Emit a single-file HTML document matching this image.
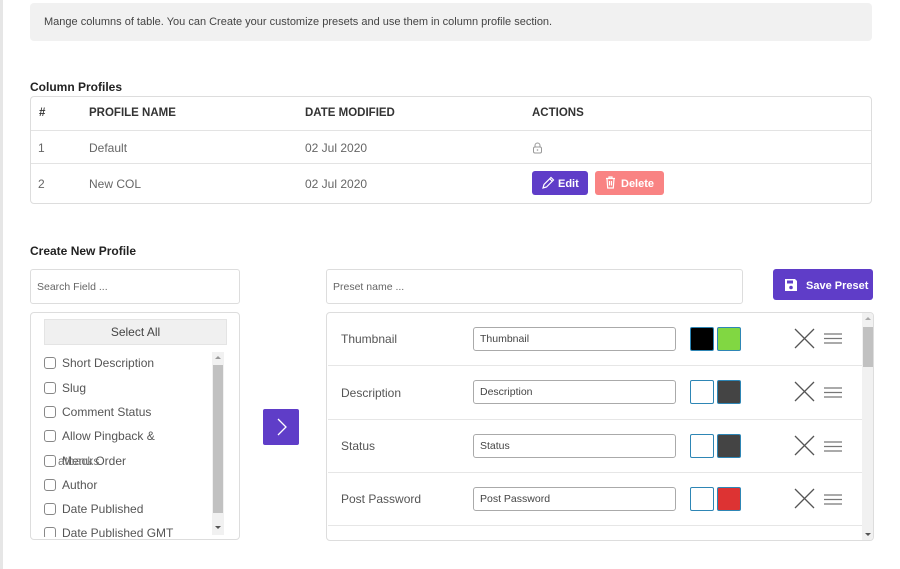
<!DOCTYPE html>
<html><head><meta charset="utf-8"><style>
*{box-sizing:border-box;margin:0;padding:0}
body{width:900px;height:569px;overflow:hidden;background:#fff;font-family:"Liberation Sans",Arial,sans-serif;color:#444;position:relative}
.a{position:absolute}
.lb{left:0;top:0;width:3px;height:569px;background:#e6e6e6}
.info{left:30px;top:3px;width:842px;height:38px;background:#f1f1f1;border-radius:4px;font-size:11px;color:#444;padding:13px 14px}
.h{font-size:12px;font-weight:bold;color:#222}
.tbl{left:30px;top:96px;width:842px;height:108px;border:1px solid #ddd;border-radius:4px;font-size:12px}
.row{position:absolute;left:0;width:840px;border-bottom:1px solid #e3e3e3}
.th{font-weight:bold;color:#333;font-size:11.5px}
.td{color:#666}
.c{position:absolute}
.btn{position:absolute;border-radius:3px;color:#fff;font-weight:bold;font-size:11px}
.inp{border:1px solid #ddd;border-radius:3px;font-size:10.5px;color:#666;padding:0 6px;display:flex;align-items:center}
.box{border:1px solid #ddd;border-radius:4px}
.item{position:absolute;left:44px;font-size:12px;color:#555;display:flex;align-items:center}
.cb{width:12px;height:12px;border:1px solid #888;border-radius:3px;margin-right:6px;display:inline-block}
.rrow{position:absolute;left:1px;width:534px;height:53px;border-bottom:1px solid #e6e6e6}
.lbl{position:absolute;left:13px;font-size:12px;color:#555}
.ri{position:absolute;left:145px;width:203px;height:24px;border:1px solid #aaa;border-radius:3px;font-size:10.5px;color:#444;padding:0 6px;display:flex;align-items:center}
.sw{position:absolute;width:24px;height:24px;border:1px solid #2e86b5;border-radius:2px}
</style></head><body>
<div class="a lb"></div>
<div class="a info">Mange columns of table. You can Create your customize presets and use them in column profile section.</div>
<div class="a h" style="left:30px;top:80px">Column Profiles</div>
<div class="a tbl">
 <div class="row" style="top:0;height:34px">
  <span class="c th" style="left:8px;top:10px">#</span>
  <span class="c th" style="left:58px;top:10px">PROFILE NAME</span>
  <span class="c th" style="left:274px;top:10px">DATE MODIFIED</span>
  <span class="c th" style="left:501px;top:10px">ACTIONS</span>
 </div>
 <div class="row" style="top:34px;height:33px">
  <span class="c td" style="left:7px;top:10px">1</span>
  <span class="c td" style="left:58px;top:10px">Default</span>
  <span class="c td" style="left:274px;top:10px">02 Jul 2020</span>
  <svg class="c" style="left:501px;top:11px" width="11" height="12" viewBox="0 0 11 12"><path d="M3 5V3.5a2.5 2.5 0 0 1 5 0V5" fill="none" stroke="#999"/><rect x="1.5" y="5" width="8" height="6" rx="1.5" fill="none" stroke="#999"/><circle cx="5.5" cy="8" r=".8" fill="#999"/></svg>
 </div>
 <div class="row" style="top:67px;height:40px;border:none">
  <span class="c td" style="left:7px;top:13px">2</span>
  <span class="c td" style="left:58px;top:13px">New COL</span>
  <span class="c td" style="left:274px;top:13px">02 Jul 2020</span>
 </div>
</div>
<div class="btn" style="left:532px;top:171px;width:56px;height:24px;background:#5f3dc8;padding:5px 0 0 9px"><svg width="14" height="13" viewBox="0 0 14 13" style="vertical-align:-2px;margin-right:3px"><path d="M2 12l1-3.5L10 1.5l2.5 2.5L5.5 11z M9 3l2.5 2.5" fill="none" stroke="#fff" stroke-width="1.2"/></svg>Edit</div>
<div class="btn" style="left:595px;top:171px;width:69px;height:24px;background:#f98383;padding:5px 0 0 10px"><svg width="11" height="13" viewBox="0 0 11 13" style="vertical-align:-2px;margin-right:5px"><path d="M1 2.5h9M4 2.5V1h3v1.5M2 2.5l.7 9.5h5.6l.7-9.5M4.5 5v4.5M6.5 5v4.5" fill="none" stroke="#fff" stroke-width="1.2"/></svg>Delete</div>

<div class="a h" style="left:30px;top:244px">Create New Profile</div>
<div class="a inp" style="left:30px;top:269px;width:210px;height:35px">Search Field ...</div>
<div class="a inp" style="left:326px;top:269px;width:417px;height:35px">Preset name ...</div>
<div class="btn" style="left:773px;top:269px;width:100px;height:31px;background:#5f3dc8;padding:9px 0 0 11px"><svg width="14" height="14" viewBox="0 0 14 14" style="vertical-align:-3px;margin-right:8px"><path d="M1 1h10l2 2v10H1z" fill="#fff"/><rect x="3" y="2.5" width="6" height="3" fill="#5f3dc8"/><circle cx="7" cy="9.5" r="1.8" fill="#5f3dc8"/></svg>Save Preset</div>

<div class="a box" style="left:30px;top:312px;width:210px;height:228px"></div>
<div class="a" style="left:44px;top:319px;width:183px;height:26px;background:#f0f0f0;border:1px solid #e4e4e4;font-size:12px;color:#444;text-align:center;line-height:24px">Select All</div>
<div class="a" style="left:212px;top:352px;width:12px;height:183px;background:#f1f1f1"></div>
<div class="a" style="left:213px;top:365px;width:10px;height:148px;background:#c1c1c1"></div>
<div class="a" style="left:215px;top:356px;width:0;height:0;border:3px solid transparent;border-bottom-color:#999;border-top:none"></div>
<div class="a" style="left:215px;top:526px;width:0;height:0;border:3px solid transparent;border-top-color:#555;border-bottom:none"></div>
<div style="position:absolute;left:0;top:0;width:212px;height:537px;overflow:hidden">
<div class="item" style="top:356px"><span class="cb"></span>Short Description</div>
<div class="item" style="top:381px"><span class="cb"></span>Slug</div>
<div class="item" style="top:405px"><span class="cb"></span>Comment Status</div>
<div class="item" style="top:429px"><span class="cb"></span>Allow Pingback &amp;</div>
<div class="item" style="top:454px"><span class="cb"></span>Menu Order</div>
<div class="item" style="top:454px;left:58px;color:#777">atbacks</div>
<div class="item" style="top:478px"><span class="cb"></span>Author</div>
<div class="item" style="top:502px"><span class="cb"></span>Date Published</div>
<div class="item" style="top:526px"><span class="cb"></span>Date Published GMT</div>
</div>

<div class="a" style="left:263px;top:409px;width:36px;height:36px;background:#5f3dc8;border-radius:2px"><svg width="36" height="36"><path d="M15 10l8 8-8 8" fill="none" stroke="#fff" stroke-width="1.3"/></svg></div>

<div class="a box" style="left:326px;top:312px;width:548px;height:229px;overflow:hidden">
 <div class="rrow" style="top:0"><span class="lbl" style="top:19px">Thumbnail</span><div class="ri" style="top:14px">Thumbnail</div><div class="sw" style="left:362px;top:14px;background:#000"></div><div class="sw" style="left:389px;top:14px;background:#81d742"></div></div>
 <div class="rrow" style="top:54px"><span class="lbl" style="top:19px">Description</span><div class="ri" style="top:13px">Description</div><div class="sw" style="left:362px;top:13px;background:#fff"></div><div class="sw" style="left:389px;top:13px;background:#444"></div></div>
 <div class="rrow" style="top:107px"><span class="lbl" style="top:19px">Status</span><div class="ri" style="top:14px">Status</div><div class="sw" style="left:362px;top:14px;background:#fff"></div><div class="sw" style="left:389px;top:14px;background:#444"></div></div>
 <div class="rrow" style="top:160px"><span class="lbl" style="top:19px">Post Password</span><div class="ri" style="top:14px">Post Password</div><div class="sw" style="left:362px;top:14px;background:#fff"></div><div class="sw" style="left:389px;top:14px;background:#dd3333"></div></div>
 <div style="position:absolute;left:535px;top:0;width:13px;height:229px;background:#f1f1f1"></div>
 <div style="position:absolute;left:536px;top:14px;width:10px;height:40px;background:#c1c1c1"></div>
 <div style="position:absolute;left:538px;top:4px;border:3px solid transparent;border-bottom-color:#aaa;border-top:none"></div>
 <div style="position:absolute;left:538px;top:220px;border:3px solid transparent;border-top-color:#555;border-bottom:none"></div>
</div>
<svg class="a" style="left:790px;top:312px" width="60" height="220">
 <g stroke="#555" stroke-width="1.3" fill="none">
  <path d="M5 17l19 19M24 17L5 36M5 70l19 19M24 70L5 89M5 124l19 19M24 124L5 143M5 177l19 19M24 177L5 196"/>
 </g>
 <g stroke="#777" stroke-width="1.3">
  <path d="M34 22h18M34 26.5h18M34 31h18M34 76h18M34 80.5h18M34 85h18M34 130h18M34 134.5h18M34 139h18M34 183h18M34 187.5h18M34 192h18"/>
 </g>
</svg>
</body></html>
